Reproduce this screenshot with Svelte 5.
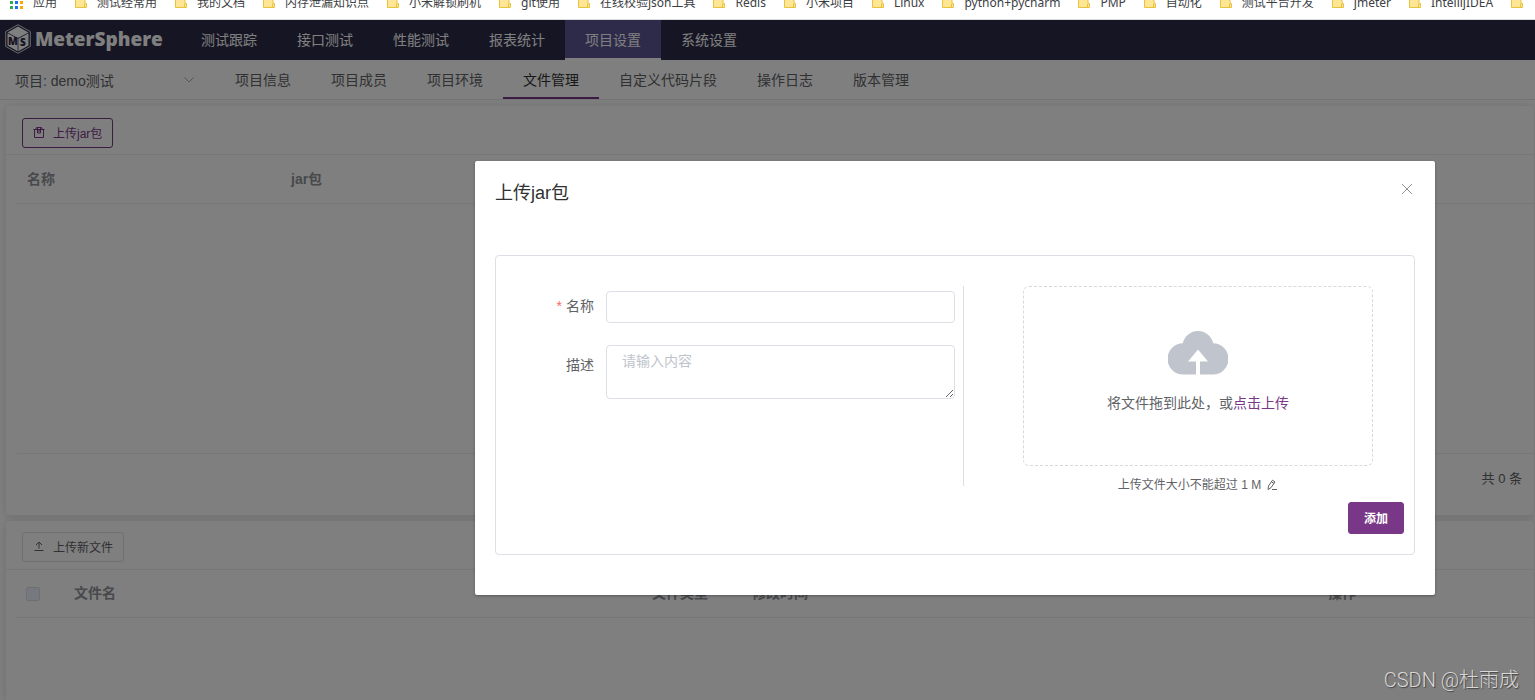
<script lang="ts">
  const bookmarks: string[] = [
    '测试经常用',
    '我的文档',
    '内存泄漏知识点',
    '小米解锁刷机',
    'git使用',
    '在线校验json工具',
    'Redis',
    '小米项目',
    'Linux',
    'python+pycharm',
    'PMP',
    '自动化',
    '测试平台开发',
    'jmeter',
    'IntellijIDEA',
    '',
  ];

  const appColors = ['#34a853', '#1a73e8', '#f9ab00'];

  const menus: string[] = ['测试跟踪', '接口测试', '性能测试', '报表统计', '项目设置', '系统设置'];
  const tabs: string[] = [
    '项目信息',
    '项目成员',
    '项目环境',
    '文件管理',
    '自定义代码片段',
    '操作日志',
    '版本管理',
  ];

  let activeMenu = $state('项目设置');
  let activeTab = $state('文件管理');
  let dialogVisible = $state(true);
  let form = $state({ name: '', description: '' });

  function submit(e: Event) {
    e.preventDefault();
  }
</script>

{#snippet folder()}
  <svg class="folder" viewBox="0 0 12 12" aria-hidden="true">
    <path d="M.5 .5h9.5v7h1.500v4H.5z" fill="#ffe695" stroke="#e8c23c" />
    <path d="M9.500 11.500V8" stroke="#e8c23c" />
  </svg>
{/snippet}

<div class="page">
  <nav class="bookmarks" aria-label="书签">
    <a class="bookmark" href="#apps">
      <svg class="grid" viewBox="0 0 13 13" aria-hidden="true">
        {#each [0, 1, 2] as row}
          {#each appColors as color, col}
            <rect x={col * 5} y={row * 5} width="3" height="3" fill={color} />
          {/each}
        {/each}
      </svg>
      应用
    </a>
    {#each bookmarks as name}
      <a class="bookmark" href="#bookmark">{@render folder()}{name}</a>
    {/each}
  </nav>

  <div class="app">
    <header class="header">
      <a class="logo" href="#home">
        <svg viewBox="0 0 26 30" aria-hidden="true">
          <path d="M13 .7 25.300 7.600v14.800L13 29.300.7 22.400V7.600z" fill="none" stroke="#fff" stroke-width=".8" />
          <path d="M13 2.500 23.500 8.400 13 14 2.500 8.400z" fill="#fff" />
          <path d="M2.500 9.300 12.600 14.800v12.400L2.500 21.600z" fill="#fff" />
          <path d="M23.500 9.300 13.400 14.800v12.400l10.100-5.600z" fill="#fff" />
          <text x="3" y="21">M</text>
          <text x="15" y="22">S</text>
        </svg>
        <span>MeterSphere</span>
      </a>
      <nav class="menu">
        {#each menus as menu}
          <a href="#menu" class:active={menu === activeMenu} onclick={() => (activeMenu = menu)}>{menu}</a>
        {/each}
      </nav>
    </header>

    <div class="subbar">
      <button class="project" type="button">
        <span>项目: demo测试</span>
        <svg viewBox="0 0 10 6" aria-hidden="true">
          <path d="M.5 .5 5 5 9.500 .5" fill="none" stroke="#a8abb2" />
        </svg>
      </button>
      <nav class="tabs">
        {#each tabs as tab}
          <a href="#tab" class:active={tab === activeTab} onclick={() => (activeTab = tab)}>{tab}</a>
        {/each}
      </nav>
    </div>

    <main class="content">
      <section class="card">
        <div class="card-header jar-header">
          <button class="btn plain" type="button" onclick={() => (dialogVisible = true)}>
            <svg viewBox="0 0 12 12" fill="none" stroke="currentColor" aria-hidden="true">
              <path d="M.5 3.500h11M1.500 3.500v8h9v-8M2.500 3.500l1-2h5l1 2M4.500 1.500v5.500h3V1.500M6 3v3" />
            </svg>
            上传jar包
          </button>
        </div>
        <div class="table-wrap jar-table">
          <table>
            <colgroup>
              <col class="col-name" />
              <col />
            </colgroup>
            <thead>
              <tr>
                <th>名称</th>
                <th>jar包</th>
              </tr>
            </thead>
          </table>
        </div>
        <div class="pagination">共 0 条</div>
      </section>

      <section class="card files">
        <div class="card-header">
          <button class="btn" type="button">
            <svg viewBox="0 0 12 12" fill="none" stroke="currentColor" aria-hidden="true">
              <path d="M1.500 10.500h9M6 8.500V2M3 5l3-3 3 3" />
            </svg>
            上传新文件
          </button>
        </div>
        <div class="table-wrap">
          <table>
            <colgroup>
              <col class="col-check" />
              <col class="col-file" />
              <col class="col-type" />
              <col class="col-time" />
              <col />
            </colgroup>
            <thead>
              <tr>
                <th><input type="checkbox" aria-label="全选" disabled /></th>
                <th>文件名</th>
                <th>文件类型</th>
                <th>修改时间</th>
                <th>操作</th>
              </tr>
            </thead>
          </table>
        </div>
      </section>
    </main>

    {#if dialogVisible}
      <div class="mask">
        <div class="dialog" role="dialog" aria-labelledby="dialog-title">
          <div class="dialog-header">
            <h2 id="dialog-title">上传jar包</h2>
            <button class="close" type="button" aria-label="关闭" onclick={() => (dialogVisible = false)}>
              <svg viewBox="0 0 12 12" fill="none" stroke="#909399" aria-hidden="true">
                <path d="M1 1l10 10M11 1 1 11" />
              </svg>
            </button>
          </div>

          <form class="box" onsubmit={submit}>
            <div class="columns">
              <div class="fields">
                <div class="field">
                  <label for="name"><span class="required">*</span>名称</label>
                  <input id="name" type="text" bind:value={form.name} />
                </div>
                <div class="field">
                  <label class="desc-label" for="description">描述</label>
                  <textarea id="description" rows="2" placeholder="请输入内容" bind:value={form.description}></textarea>
                </div>
              </div>

              <div class="upload">
                <div class="drop">
                  <svg class="cloud" viewBox="0 0 60 45" aria-hidden="true">
                    <path
                      d="M15.500 44.500A15.600 15.600 0 0 1 14.800 13.200 15.600 15.600 0 0 1 45.200 13.200 15.600 15.600 0 0 1 44.500 44.500H32V31.500h8L30 19.500 20 31.500h8v13z"
                      fill="#c0c4cc"
                    />
                  </svg>
                  <p>将文件拖到此处，或<a href="#upload">点击上传</a></p>
                </div>
                <div class="tip">
                  上传文件大小不能超过 1 M
                  <svg viewBox="0 0 12 12" fill="none" stroke="#606266" aria-hidden="true">
                    <path d="M2 10.500 2.500 7 6.500 1.200 9 3 5 8.700zM5.500 2.800 8 4.500M6 10.500h5" />
                  </svg>
                </div>
              </div>
            </div>
            <div class="actions">
              <button class="submit" type="submit">添加</button>
            </div>
          </form>
        </div>
      </div>
    {/if}

    <div class="watermark">CSDN @杜雨成</div>
  </div>
</div>

<style>
  :global(body) {
    margin: 0;
    font-family: 'Liberation Sans', 'Noto Sans CJK SC', sans-serif;
    font-size: 14px;
    color: #606266;
  }

  .page {
    display: flex;
    flex-direction: column;
    height: 100vh;
    overflow: hidden;
  }

  a {
    color: inherit;
    text-decoration: none;
  }

  button {
    font-family: inherit;
    cursor: pointer;
  }

  /* Bookmarks bar */
  .bookmarks {
    display: flex;
    flex: none;
    align-items: flex-end;
    gap: 18px;
    box-sizing: border-box;
    height: 20px;
    padding: 0 0 8px 10px;
    border-bottom: 1px solid #dadce0;
    background: #fff;
    overflow: hidden;
  }

  .bookmark {
    display: flex;
    flex: none;
    align-items: center;
    gap: 10px;
    height: 16px;
    font-family: 'Noto Sans', 'Noto Sans CJK SC', sans-serif;
    font-size: 12px;
    line-height: 16px;
    color: #3c4043;
    white-space: nowrap;
  }

  .folder {
    width: 12px;
    height: 12px;
    margin-bottom: 2px;
    fill: none;
  }

  .grid {
    width: 13px;
    height: 13px;
    margin-bottom: 2px;
  }

  /* Application shell */
  .app {
    position: relative;
    display: flex;
    flex: 1;
    flex-direction: column;
    min-height: 0;
    background: #fff;
  }

  .header {
    display: flex;
    flex: none;
    height: 40px;
    background: #2c2a48;
    color: #fff;
  }

  .logo {
    display: flex;
    align-items: center;
    gap: 4px;
    box-sizing: border-box;
    width: 181px;
    padding: 0 0 2px 5px;
    font-family: 'Open Sans', 'Noto Sans', sans-serif;
    font-size: 19px;
    font-weight: 800;
  }

  .logo svg {
    flex: none;
    width: 26px;
    height: 30px;
  }

  .logo text {
    font-family: 'Noto Sans', sans-serif;
    font-size: 10px;
    font-weight: 900;
    fill: #2c2a48;
  }

  .menu,
  .tabs {
    display: flex;
  }

  .menu a,
  .tabs a {
    box-sizing: border-box;
    padding: 0 20px;
    border-bottom: 2px solid transparent;
    line-height: 40px;
    white-space: nowrap;
  }

  .menu .active {
    border-bottom-color: #fff;
    background: #5a5494;
    background-clip: padding-box;
  }

  .subbar {
    display: flex;
    flex: none;
    box-sizing: border-box;
    height: 40px;
    border-bottom: 1px solid #e6e6e6;
  }

  .project {
    display: flex;
    align-items: center;
    justify-content: space-between;
    width: 215px;
    padding: 0 21px 0 15px;
    border: 0;
    background: none;
    font-size: 14px;
    color: #606266;
  }

  .project svg {
    width: 10px;
    height: 6px;
  }

  .tabs .active {
    border-bottom-color: #783887;
    color: #303133;
  }

  /* Cards */
  .content {
    display: flex;
    flex: 1;
    flex-direction: column;
    gap: 6px;
    min-height: 0;
    padding: 6px 1px 0 6px;
    overflow: hidden;
  }

  .card {
    border-radius: 4px;
    background: #fff;
    box-shadow: 0 1px 10px rgba(0, 0, 0, 0.14);
  }

  .files {
    flex: 1;
    border-radius: 4px 4px 0 0;
  }

  .card-header {
    padding: 11px 16px 7px;
    border-bottom: 1px solid #ebeef5;
  }

  .jar-header {
    padding-top: 12px;
    padding-bottom: 6px;
  }

  .btn {
    display: flex;
    align-items: center;
    gap: 8px;
    height: 30px;
    padding: 0 10px 2px;
    border: 1px solid #dcdfe6;
    border-radius: 3px;
    background: #fff;
    font-size: 12px;
    color: #606266;
  }

  .btn svg {
    width: 12px;
    height: 12px;
  }

  .plain {
    border-color: #783887;
    color: #783887;
  }

  .table-wrap {
    margin-left: 10px;
  }

  .jar-table {
    min-height: 298px;
    margin-left: 11px;
    border-bottom: 1px solid #ebeef5;
  }

  table {
    width: 100%;
    border-collapse: collapse;
    table-layout: fixed;
  }

  th {
    height: 47px;
    padding: 0 10px;
    border-bottom: 1px solid #ebeef5;
    font-weight: 700;
    line-height: 23px;
    color: #909399;
    text-align: left;
  }

  .jar-table th {
    height: 48px;
  }

  .col-name {
    width: 264px;
  }

  .col-check {
    width: 48px;
  }

  .col-file {
    width: 578px;
  }

  .col-type {
    width: 100px;
  }

  .col-time {
    width: 576px;
  }

  input[type='checkbox'] {
    display: block;
    box-sizing: border-box;
    width: 14px;
    height: 14px;
    margin: 0;
    border: 1px solid #dcdfe6;
    border-radius: 2px;
    background: #edf2fc;
    appearance: none;
  }

  .pagination {
    padding: 11px 12px 22px;
    font-size: 13px;
    line-height: 28px;
    text-align: right;
  }

  /* Dialog */
  .mask {
    position: absolute;
    inset: 0;
    display: flex;
    align-items: flex-start;
    justify-content: flex-end;
    padding: 141px 100px 0;
    background: rgba(0, 0, 0, 0.5);
  }

  .dialog {
    box-sizing: border-box;
    width: 960px;
    padding: 20px 20px 40px;
    border-radius: 2px;
    background: #fff;
    box-shadow: 0 1px 3px rgba(0, 0, 0, 0.3);
  }

  .dialog-header {
    display: flex;
    align-items: flex-start;
    justify-content: space-between;
    padding-bottom: 50px;
  }

  h2 {
    margin: 0;
    font-size: 18px;
    font-weight: 400;
    line-height: 24px;
    color: #303133;
  }

  .close {
    display: flex;
    padding: 2px;
    border: 0;
    background: none;
  }

  .close svg {
    width: 12px;
    height: 12px;
  }

  .box {
    box-sizing: border-box;
    min-height: 300px;
    padding: 30px 10px 20px;
    border: 1px solid #dcdfe6;
    border-radius: 4px;
  }

  .columns {
    display: flex;
    align-items: flex-start;
  }

  .fields {
    display: flex;
    flex: 1;
    flex-direction: column;
    gap: 22px;
    box-sizing: border-box;
    height: 200px;
    padding: 5px 8px 0 0;
    border-right: 1px solid #dcdfe6;
  }

  .field {
    display: flex;
    align-items: flex-start;
  }

  label {
    flex: 1;
    padding-right: 12px;
    line-height: 30px;
    text-align: right;
  }

  .desc-label {
    line-height: 40px;
  }

  .required {
    margin-right: 4px;
    color: #f56c6c;
  }

  .field input,
  textarea {
    box-sizing: border-box;
    width: 349px;
    padding: 5px 15px;
    border: 1px solid #dcdfe6;
    border-radius: 4px;
    background: #fff;
    font-family: inherit;
    font-size: 14px;
    line-height: 21px;
    color: #606266;
  }

  .field input {
    height: 32px;
  }

  textarea {
    height: 54px;
    resize: vertical;
  }

  textarea::placeholder {
    color: #c0c4cc;
  }

  .upload {
    width: 350px;
    padding: 0 31px 0 59px;
  }

  .drop {
    display: flex;
    flex-direction: column;
    align-items: center;
    box-sizing: border-box;
    height: 180px;
    padding-top: 43px;
    border: 1px dashed #d9d9d9;
    border-radius: 6px;
  }

  .cloud {
    width: 60px;
    height: 45px;
  }

  .drop p {
    margin: 18px 0 0;
    line-height: 20px;
  }

  .drop a {
    color: #783887;
  }

  .tip {
    display: flex;
    align-items: center;
    justify-content: center;
    gap: 5px;
    padding-top: 9px;
    font-size: 12px;
    line-height: 20px;
  }

  .tip svg {
    width: 12px;
    height: 12px;
  }

  .actions {
    display: flex;
    justify-content: flex-end;
    padding-top: 7px;
  }

  .submit {
    height: 32px;
    padding: 0 15px 2px;
    border: 1px solid #783887;
    border-radius: 3px;
    background: #783887;
    font-size: 12px;
    font-weight: 700;
    color: #fff;
  }

  .watermark {
    position: absolute;
    right: 16px;
    bottom: 6px;
    font-family: Roboto, 'Noto Sans CJK SC', sans-serif;
    font-size: 20px;
    font-weight: 300;
    line-height: 28px;
    color: #d8d8d8;
    text-shadow: 1px 1px 1px #444;
  }
</style>
